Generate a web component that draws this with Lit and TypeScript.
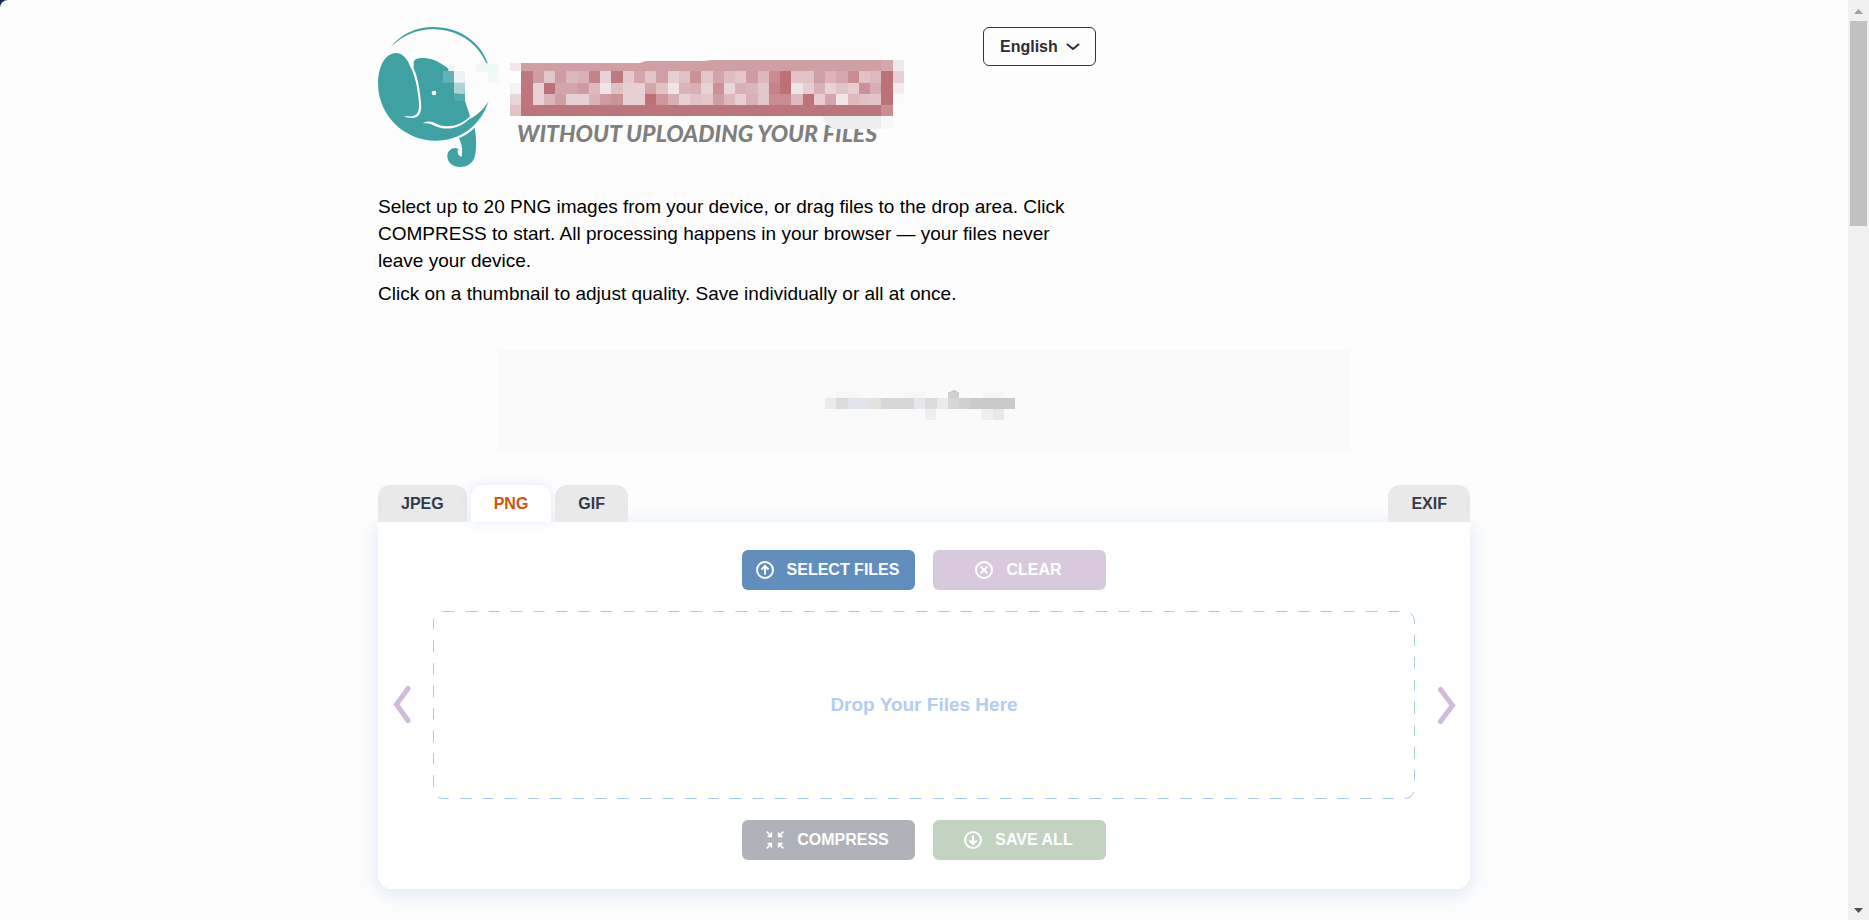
import { LitElement, html, css, svg } from "lit";
import { customElement, state } from "lit/decorators.js";

const columnEdges = [
  510, 521, 533, 544, 555, 566, 578, 589, 600, 611, 623, 634, 645, 656, 668, 679, 690, 701, 713,
  724, 735, 746, 758, 769, 780, 791, 803, 814, 825, 836, 848, 859, 870, 881, 893, 904,
];

const titleRows: { y: number; h: number; cells: string }[] = [
  {
    y: 71, h: 12,
    cells:
      "ffffff bd777d cf9ea3 e1c6ca cf9ca1 dcb8bc d8b0b5 c38489 e7d3d7 be7a80 e4c8cc d3a5aa e2c5c9 cf9fa4 e7d0d4 e0c1c6 cb9195 e2c6ca d3a5aa dfbcc0 e2c6ca cf9ba0 deb8bd c98c90 bd7075 e1c4c8 e1c4c8 d09fa4 dbb3b8 d5a6ab c98c90 e1c2c6 deb9be bd7278 e6d0d3",
  },
  {
    y: 83, h: 11,
    cells:
      "f7f1f2 bd777d e7d1d4 bd7075 d3a5aa d3a5aa cf9ba0 deb9bd f0e4e6 e0c1c4 e7d0d3 e6d0d3 d3a5aa e1c2c5 efe3e5 dab4b9 d8afb4 e7d3d6 cb9195 e8d6d9 d9b0b5 dab5ba e1c6ca c38388 bd7075 f0e4e6 e7cdd1 d9b0b5 e7d3d6 e1c4c8 e7cdd1 cb9195 d8acb1 bd7278 f5ebed",
  },
  {
    y: 94, h: 11,
    cells:
      "e8d5d8 bd777d e7d1d4 dab6ba d09fa4 e7d0d4 e7d0d4 d9b2b6 d09b9f cb9498 e7d0d3 e6d0d3 bd7075 cd979b d8afb3 e7d0d4 e1c2c6 e2c6ca d09fa4 deb9be e7d0d4 d8b0b5 e1c6ca c98c90 c98c90 deb9be bd7278 e7cdd1 d3a5aa f0e4e6 deb9be e0c1c5 e1c4c8 bd7278 fcfbfb",
  },
];

@customElement("brand-logo")
export class BrandLogo extends LitElement {
  static styles = css`
    :host { display: block; }
    .mark { display: block; }
    .teal { fill: #40a1a2; }
    .gap { fill: #fdfdfd; }
    .tagline { font: italic 900 23px Lato, "Liberation Sans", sans-serif; fill: #7f7f7f; }
  `;

  render() {
    return html`
      <svg class="mark" width="526" height="140" viewBox="378 27 526 140" role="img" aria-label="Without uploading your files">
        <g transform="translate(360 10) scale(.33333)">
          <path class="teal" d="M92 111C124 70 170 51 220 51C297 51 362 95 384 162L380 162C352 97 292 59 222 58C172 57 130 76 92 111Z"/>
          <path class="teal" d="M107 129C72 131 54 175 54 222C56 320 135 392 227 392C300 392 362 348 386 273C372 297 352 315 331 326L330 318L318 282L315 272L305 240L282 183C262 180 240 146 190 144C166 143 158 152 161 166L154 176C143 146 127 128 107 129Z"/>
          <path class="gap" d="M146 160C166 195 173 235 177 280C178 305 172 317 157 319C147 320 139 318 132 319C143 325 160 326 171 320C183 313 185 297 183 277C179 230 171 194 161 176L160 156Z"/>
          <path class="gap" d="M186 341C204 330 218 335 232 343C258 355 303 349 331 318L341 314C308 352 268 364 230 350C214 343 203 338 186 341Z"/>
          <circle class="gap" cx="222" cy="249" r="7"/>
          <path class="teal" d="M344 353C349 380 350 410 346 433C341 459 324 471 300 471C276 471 262 456 262 439C262 422 275 413 287 414C297 415 299 422 305 441C308 424 307 404 297 385C315 378 330 366 344 353Z"/>
          <path class="gap" d="M293 418C291 430 295 437 304 441L305 430Z"/>
          <path class="gap" d="M282 160H450V272H315L282 240Z"/>
          <rect x="249" y="183" width="33" height="35" fill="#64b3b4"/>
          <rect x="265" y="165" width="17" height="18" fill="#edf6f6"/>
          <rect x="282" y="183" width="33" height="35" fill="#eaf4f4"/>
          <rect x="282" y="218" width="33" height="33" fill="#add5d6"/>
          <rect x="282" y="251" width="33" height="21" fill="#53abac"/>
          <rect x="349" y="162" width="67" height="22" fill="#eff7f7"/>
          <rect x="383" y="184" width="33" height="34" fill="#f2f9f9"/>
        </g>
        <text class="tagline" x="517" y="142">WITHOUT UPLOADING YOUR FILES</text>
        <path fill="#cf9fa3" d="M521 63H640L646 61H703L712 60H881V71H521Z"/>
        <rect x="510" y="63" width="11" height="8" fill="#f3e7e8"/>
        <rect x="881" y="60" width="12" height="11" fill="#d4a7ac"/>
        <rect x="893" y="60" width="11" height="11" fill="#f1e8e9"/>
        ${titleRows.map((row) =>
          row.cells.split(" ").map(
            (c, i) => svg`<rect x=${columnEdges[i]} y=${row.y} width=${columnEdges[i + 1] - columnEdges[i]} height=${row.h} fill=${"#" + c} />`
          )
        )}
        <rect x="510" y="105" width="11" height="11" fill="#e2c2c5"/>
        <rect x="521" y="105" width="360" height="11" fill="#bc757b"/>
        <rect x="881" y="105" width="12" height="11" fill="#c98e92"/>
        <path fill="#ededed" d="M823 116H881V129H834C828 126 824 121 823 116Z"/>
        <rect x="881" y="116" width="12" height="13" fill="#f8f8f8"/>
      </svg>
    `;
  }
}

const outline = {
  up: svg`<circle cx="9" cy="9" r="8"/><path d="M9 13.5V5M5.5 8.5L9 5L12.5 8.5"/>`,
  clear: svg`<circle cx="9" cy="9" r="8"/><path d="M5.5 5.5L12.5 12.5M12.5 5.5L5.5 12.5"/>`,
  down: svg`<circle cx="9" cy="9" r="8"/><path d="M9 4.5V13M5.5 9.5L9 13L12.5 9.5"/>`,
  shrink: svg`<path stroke-width="1.6" d="M.6 .6L5 5M5.4 1.5V5.4H1.5M17.4 .6L13 5M12.6 1.5V5.4H16.5M.6 17.4L5 13M5.4 16.5V12.6H1.5M17.4 17.4L13 13M12.6 16.5V12.6H16.5"/>`,
};

@customElement("app-root")
export class AppRoot extends LitElement {
  static styles = css`
    :host {
      display: block;
      font-family: "Liberation Sans", Arial, sans-serif;
      color: #000;
      background: #16284a;
    }
    .window { display: grid; grid-template-columns: 1fr 21px; height: 100vh; overflow: hidden; }
    .page { background: #fdfdfd; border-top-left-radius: 8px; padding: 27px 24px 0; overflow: hidden; }
    .content { max-width: 1092px; margin: 0 auto; }
    .intro { max-width: 718px; }
    .top { display: flex; justify-content: space-between; align-items: flex-start; margin-bottom: 26px; }
    .language { display: grid; align-items: center; }
    .language select {
      grid-area: 1 / 1;
      appearance: none;
      width: 113px;
      height: 39px;
      padding: 0 16px;
      border: 1px solid #33343a;
      border-radius: 6px;
      background: transparent;
      font: bold 16px "Liberation Sans", Arial, sans-serif;
      color: #2d2d33;
    }
    .language svg { grid-area: 1 / 1; justify-self: end; margin-right: 16px; pointer-events: none; }
    p { margin: 0 0 6px; font-size: 19px; line-height: 27px; }
    .banner { display: grid; place-items: center; max-width: 853px; height: 101px; margin: 43px auto 34px; background: #fafafa; }
    .banner svg { display: block; }
    .tabs { display: flex; gap: 4px; }
    .tabs button {
      height: 37px;
      padding: 0 23px;
      border: 0;
      border-radius: 12px 12px 0 0;
      background: #e9e9e9;
      font: bold 16px "Liberation Sans", Arial, sans-serif;
      color: #333b4a;
    }
    .tabs button.active { color: #d2540f; background: #fff; box-shadow: 0 0 12px rgba(120, 160, 230, 0.2); }
    .tabs .last { margin-left: auto; }
    .card {
      display: grid;
      grid-template-columns: 55px 1fr 55px;
      row-gap: 21px;
      padding: 28px 0 29px;
      background: #fff;
      border-radius: 0 0 14px 14px;
      box-shadow: 0 4px 20px rgba(70, 140, 220, 0.2);
    }
    .actions { grid-column: 1 / -1; display: flex; justify-content: center; gap: 18px; }
    .actions button {
      display: flex;
      align-items: center;
      justify-content: center;
      gap: 13px;
      width: 173px;
      height: 40px;
      padding: 0 2px 0 0;
      border: 0;
      border-radius: 6px;
      font: bold 16px "Liberation Sans", Arial, sans-serif;
      color: #fff;
    }
    .actions svg { fill: none; stroke: currentColor; stroke-width: 2; }
    .select { background: #618ebd; }
    .clear { background: #d9c9dd; }
    .compress { background: #afb2b8; }
    .save { background: #c2d3c1; }
    .arrow { display: grid; place-items: center; padding: 0; border: 0; background: none; }
    .arrow.prev { padding-right: 8px; }
    .arrow.next { padding-left: 8px; }
    .arrow path { fill: none; stroke: #d0bbd8; stroke-width: 5; stroke-linecap: round; stroke-linejoin: miter; }
    .drop { display: grid; height: 188px; place-items: center; }
    .drop > * { grid-area: 1 / 1; }
    .drop svg { width: 100%; height: 100%; overflow: visible; }
    .drop rect { fill: none; stroke: #a9c8f2; stroke-width: 1; width: calc(100% - 1px); height: calc(100% - 1px); }
    .drop span { font-weight: bold; font-size: 19px; color: #b3ccf0; }
    .scrollbar { display: flex; flex-direction: column; align-items: center; background: #f0f0f0; }
    .scrollbar svg { flex: none; display: block; }
    .thumb { width: 17px; height: 205px; background: #c1c1c1; }
    .space { flex: 1; }
  `;

  @state() private format = "PNG";

  private tab(name: string, extra = "") {
    return html`<button
      type="button"
      role="tab"
      class="${extra} ${this.format === name ? "active" : ""}"
      aria-selected=${this.format === name}
      @click=${() => (this.format = name)}
    >${name}</button>`;
  }

  private icon(shape: unknown) {
    return html`<svg width="18" height="18" viewBox="0 0 18 18" aria-hidden="true">${shape}</svg>`;
  }

  render() {
    return html`
      <div class="window">
        <main class="page">
          <div class="content">
            <div class="intro">
              <header class="top">
                <brand-logo></brand-logo>
                <label class="language">
                  <select aria-label="Language"><option>English</option></select>
                  <svg width="14" height="8" viewBox="0 0 14 8" fill="none" stroke="#2d2d33" stroke-width="2" stroke-linecap="round" stroke-linejoin="round" aria-hidden="true"><path d="M1.5 1.5L7 6L12.5 1.5"/></svg>
                </label>
              </header>
              <p>Select up to 20 PNG images from your device, or drag files to the drop area. Click COMPRESS to start. All processing happens in your browser — your files never leave your device.</p>
              <p>Click on a thumbnail to adjust quality. Save individually or all at once.</p>
            </div>
            <div class="banner">
              <svg width="202" height="32" viewBox="823 385 202 32" overflow="visible" aria-hidden="true">
                <path fill="#f6f6f5" d="M836 392H859V398H836ZM904 392H925V398H904ZM982 392H1004V398H982Z"/>
                <path fill="#ebebea" d="M825 398H836V409H825ZM937 398H948V409H937Z"/>
                <path fill="#dcdbda" d="M836 398H848V409H836ZM925 398H937V409H925Z"/>
                <path fill="#e3e2e1" d="M870 398H881V409H870Z"/>
                <path fill="#e1e4eb" d="M848 398H870V409H848Z"/>
                <path fill="#e6e7ea" d="M914 398H925V409H914Z"/>
                <path fill="#d6d7d7" d="M881 398H914V409H881ZM948 398H970V409H948Z"/>
                <path fill="#d0d0d0" d="M948 392H959V398H948ZM959 398H970V409H959Z"/>
                <path fill="#cacaca" d="M970 398H1015V409H970Z"/>
                <path fill="#c3c3c3" d="M950 392L954 390L958 392Z"/>
                <path fill="#efefef" d="M925 409H936V420H925ZM981 409H993V420H981Z"/>
                <path fill="#e8e8e8" d="M993 409H1004V420H993Z"/>
              </svg>
            </div>
            <nav class="tabs" role="tablist">
              ${this.tab("JPEG")}${this.tab("PNG")}${this.tab("GIF")}${this.tab("EXIF", "last")}
            </nav>
            <section class="card">
              <div class="actions">
                <button type="button" class="select">${this.icon(outline.up)}SELECT FILES</button>
                <button type="button" class="clear">${this.icon(outline.clear)}CLEAR</button>
              </div>
              <button type="button" class="arrow prev" aria-label="Previous">
                <svg width="20" height="40" viewBox="0 0 20 40"><path d="M16 3.5L4.5 19.5L16 35.5"/></svg>
              </button>
              <div class="drop">
                <svg aria-hidden="true"><rect x="0.5" y="0.5" rx="10" stroke-dasharray="11 11 12 11"/></svg>
                <span>Drop Your Files Here</span>
              </div>
              <button type="button" class="arrow next" aria-label="Next">
                <svg width="20" height="40" viewBox="0 0 20 40"><path d="M3.5 4.5L15.5 20.5L3.5 36.5"/></svg>
              </button>
              <div class="actions">
                <button type="button" class="compress">${this.icon(outline.shrink)}COMPRESS</button>
                <button type="button" class="save">${this.icon(outline.down)}SAVE ALL</button>
              </div>
            </section>
          </div>
        </main>
        <div class="scrollbar" aria-hidden="true">
          <svg width="21" height="21" viewBox="0 0 21 21"><path fill="#a3a3a3" d="M6 14L10.5 9L15 14Z"/></svg>
          <div class="thumb"></div>
          <div class="space"></div>
          <svg width="21" height="21" viewBox="0 0 21 21"><path fill="#505050" d="M6 9L10.5 14L15 9Z"/></svg>
        </div>
      </div>
    `;
  }
}
